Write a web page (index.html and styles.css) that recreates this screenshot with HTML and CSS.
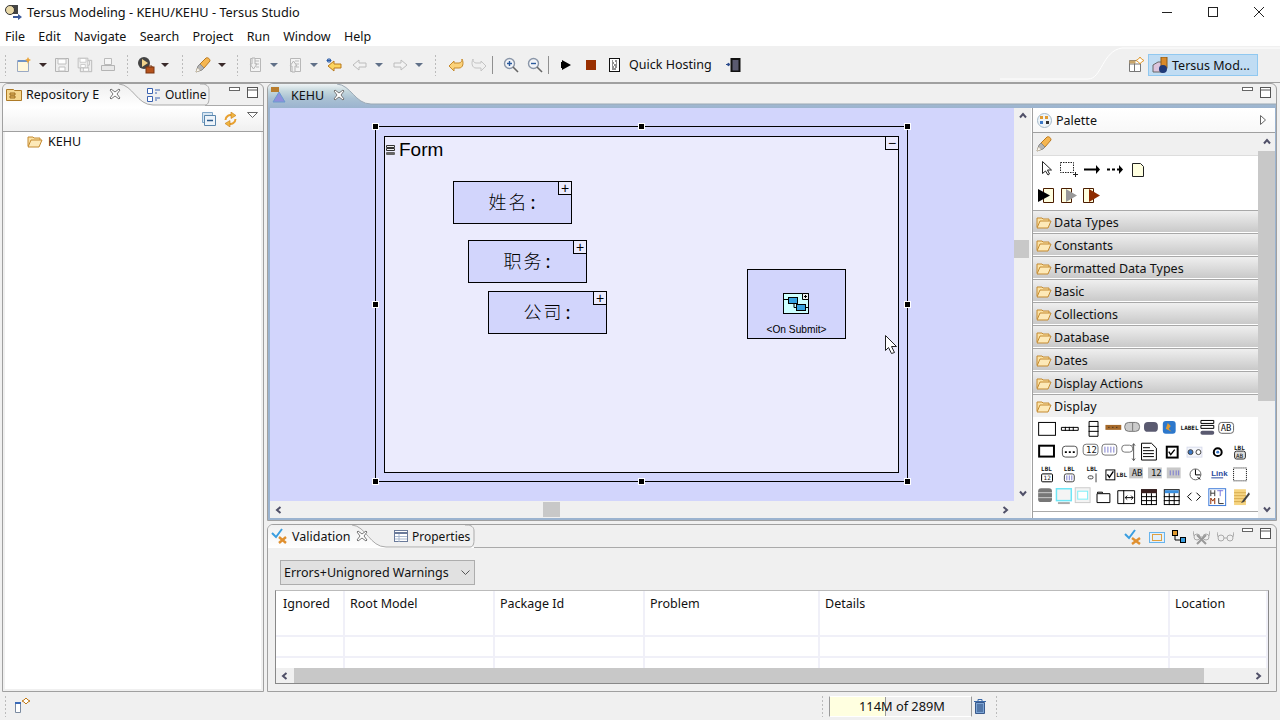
FILE: index.html
```html
<!DOCTYPE html>
<html lang="en">
  <head>
    <meta charset="UTF-8" />
    <title>Tersus Modeling - KEHU/KEHU - Tersus Studio</title>
    <link rel="stylesheet" href="styles.css">
  </head>
  <body>
    <svg class="defs" width="0" height="0">
      <defs>
        <symbol id="folder" viewBox="0 0 16 13">
          <path d="M1 11V2h5l1 1h6v2" fill="#fce3a6" stroke="#c48a30"/>
          <path d="M1 12l3-7h11l-3 7z" fill="#fde9b8" stroke="#c48a30"/>
        </symbol>
        <symbol id="x" viewBox="0 0 12 12">
          <path d="M2 1l4 3 4-3 1 1-3 4 3 4-1 1-4-3-4 3-1-1 3-4-3-4z" fill="#fff" stroke="#777"/>
        </symbol>
        <symbol id="min" viewBox="0 0 11 5">
          <rect x=".5" y=".5" width="10" height="3" fill="#fff" stroke="#666"/>
        </symbol>
        <symbol id="max" viewBox="0 0 11 11">
          <rect x=".5" y=".5" width="10" height="10" fill="#fff" stroke="#555"/>
          <path d="M0 3h11" stroke="#555"/>
        </symbol>
        <symbol id="left" viewBox="0 0 8 8">
          <path d="M5.500 1L2 4l3.500 3" fill="none" stroke="#505068" stroke-width="2"/>
        </symbol>
        <symbol id="right" viewBox="0 0 8 8">
          <path d="M2.500 1L6 4 2.500 7" fill="none" stroke="#505068" stroke-width="2"/>
        </symbol>
        <symbol id="up" viewBox="0 0 8 8">
          <path d="M1 5.500L4 2l3 3.500" fill="none" stroke="#505068" stroke-width="2"/>
        </symbol>
        <symbol id="down" viewBox="0 0 8 8">
          <path d="M1 2.500L4 6l3-3.500" fill="none" stroke="#505068" stroke-width="2"/>
        </symbol>
        <symbol id="pencil" viewBox="0 0 16 16">
          <path d="M5 7l6-6c2-1 4 1 4 3l-6 7z" fill="#f5b651" stroke="#b9781f"/>
          <path d="M5 7l4 4-2 2-6 2 2-6z" fill="#b4b4b4" stroke="#8a8a8a"/>
          <path d="M1 15l1.500-4 2.500 2.500z" fill="#fff" stroke="#c8b48c" stroke-width=".5"/>
        </symbol>
        <symbol id="floppy" viewBox="0 0 16 16">
          <path d="M1.500 1.500h13v13h-13z" fill="#eee" stroke="#b4b4b4"/>
          <path d="M4 2h8v5H4zM5 10h6v4H5z" fill="#fff" stroke="#c0c0c0"/>
        </symbol>
        <symbol id="page-gray" viewBox="0 0 16 16">
          <path d="M3.500 1.500h10v13h-10z" fill="#f4f4f4" stroke="#b8b8b8"/>
          <path d="M8 4h4M8 7h4M9 10h3" stroke="#bbb"/>
        </symbol>
        <symbol id="arrow-gray" viewBox="0 0 16 16">
          <path d="M1 8l6-5v3h7v4H7v3z" fill="#f2f2f2" stroke="#bcbcbc"/>
        </symbol>
      </defs>
    </svg>

    <header class="titlebar">
      <svg class="app-icon" width="17" height="16" viewBox="0 0 17 16">
        <rect x="6" y="1" width="7" height="9" fill="#444"/>
        <circle cx="5" cy="6" r="4.500" fill="#e9d9a8" stroke="#333"/>
        <path d="M8 12h5v-2l4 3-4 3v-2H8z" fill="#3c5a9c"/>
      </svg>
      <span class="title">Tersus Modeling - KEHU/KEHU - Tersus Studio</span>
      <div class="win-buttons">
        <span class="win-btn"><svg width="10" height="10"><path d="M0 5.500h10" stroke="#222"/></svg></span>
        <span class="win-btn"><svg width="10" height="10"><rect x=".5" y=".5" width="9" height="9" fill="none" stroke="#222"/></svg></span>
        <span class="win-btn"><svg width="10" height="10"><path d="M0 0l10 10M10 0L0 10" stroke="#222"/></svg></span>
      </div>
    </header>

    <nav class="menubar">
      <span>File</span><span>Edit</span><span>Navigate</span><span>Search</span>
      <span>Project</span><span>Run</span><span>Window</span><span>Help</span>
    </nav>

    <div class="toolbar">
      <span class="grip first"></span>
      <span class="tb">
        <svg width="16" height="16" viewBox="0 0 16 16"><path d="M1.500 3.500h11v11h-11z" fill="#fff7dc" stroke="#9aa9c4"/><path d="M2 4h10" stroke="#6f93c8" stroke-width="2"/><path d="M12 0l1 2 2 1-2 1-1 3-1-3-2-1 2-1z" fill="#e8a33a"/></svg>
      </span>
      <span class="dd"></span>
      <span class="tb"><svg width="16" height="16"><use href="#floppy"/></svg></span>
      <span class="tb"><svg width="16" height="16"><use href="#floppy" x="2" y="2" width="14" height="14"/><use href="#floppy" width="12" height="12"/></svg></span>
      <span class="tb">
        <svg width="16" height="16" viewBox="0 0 16 16"><path d="M4.500 1.500h7v6h-7z" fill="#f6f6f6" stroke="#bbb"/><path d="M1.500 8.500h13v5h-13z" fill="#e8e8e8" stroke="#b4b4b4"/></svg>
      </span>
      <span class="grip"></span>
      <span class="tb">
        <svg width="18" height="18" viewBox="0 0 18 18"><circle cx="7" cy="7" r="6" fill="#444"/><path d="M5 3l6 4-6 4z" fill="#f3d48c"/><rect x="9" y="11" width="8" height="6" fill="#b5521c" stroke="#7a3410"/><path d="M11 11v-1h4v1" fill="none" stroke="#7a3410"/></svg>
      </span>
      <span class="dd"></span>
      <span class="grip loose"></span>
      <span class="tb"><svg width="16" height="16"><use href="#pencil"/></svg></span>
      <span class="dd"></span>
      <span class="grip tight"></span>
      <span class="tb">
        <svg width="16" height="16" viewBox="0 0 16 16"><use href="#page-gray"/><path d="M5 1h3v6h2l-3.500 5L3 7h2z" fill="#f1f1f1" stroke="#b4b4b4"/></svg>
      </span>
      <span class="dd nav"></span>
      <span class="tb">
        <svg width="16" height="16" viewBox="0 0 16 16"><use href="#page-gray"/><path d="M5 15V9H3l3.500-5L10 9H8v6z" fill="#f1f1f1" stroke="#b4b4b4"/></svg>
      </span>
      <span class="dd nav"></span>
      <span class="tb">
        <svg width="17" height="16" viewBox="0 0 17 16"><path d="M2 9l6-5v3h7v4H8v3z" fill="#fbd45f" stroke="#b9791c"/><path d="M3 1v5M0.500 3.500h5M1 2l4 3M5 2L1 5" stroke="#2a5ca8"/></svg>
      </span>
      <span class="tb push-2"><svg width="16" height="16"><use href="#arrow-gray"/></svg></span>
      <span class="dd nav"></span>
      <span class="tb"><svg width="16" height="16"><g transform="matrix(-1 0 0 1 16 0)"><use href="#arrow-gray"/></g></svg></span>
      <span class="dd nav short"></span>
      <span class="grip wide"></span>
      <span class="tb">
        <svg width="16" height="16" viewBox="0 0 16 16"><path d="M1 9l5-5v2h5c2 0 3-2 3-4 2 4 1 9-3 9H6v3z" fill="#fbd27a" stroke="#c68a2c"/></svg>
      </span>
      <span class="tb">
        <svg width="16" height="16" viewBox="0 0 16 16"><path d="M15 9l-5-5v2H5C3 6 2 4 2 2c-2 4-1 9 3 9h5v3z" fill="#f0f0f0" stroke="#c4c4c4"/></svg>
      </span>
      <span class="sep sep-a"></span>
      <span class="tb">
        <svg width="16" height="16" viewBox="0 0 16 16"><circle cx="6.500" cy="6.500" r="5" fill="#f2f4f8" stroke="#8a96a8" stroke-width="1.400"/><path d="M4 6.500h5M6.500 4v5" stroke="#2b5a9c" stroke-width="1.400"/><path d="M10 10l5 5" stroke="#666" stroke-width="1.600"/></svg>
      </span>
      <span class="tb push-1">
        <svg width="16" height="16" viewBox="0 0 16 16"><circle cx="6.500" cy="6.500" r="5" fill="#f2f4f8" stroke="#8a96a8" stroke-width="1.400"/><path d="M4 6.500h5" stroke="#2b5a9c" stroke-width="1.400"/><path d="M10 10l5 5" stroke="#666" stroke-width="1.600"/></svg>
      </span>
      <span class="sep sep-b"></span>
      <span class="tb"><svg width="10" height="10" viewBox="0 0 10 10"><path d="M1 0l9 5-9 5v-2H0V2h1z" fill="#000"/></svg></span>
      <span class="tb push-2"><svg width="10" height="10"><rect width="10" height="10" fill="#992f00"/></svg></span>
      <span class="tb push-1">
        <svg width="11" height="14" viewBox="0 0 11 14"><rect x=".5" y=".5" width="10" height="13" fill="#fff" stroke="#111"/><path d="M3 3h1M6 3h2M3 5h2M7 5h1M3 7h1M5 7h3M3 9h2M6 9h2M3 11h4" stroke="#222"/></svg>
      </span>
      <span class="quick">Quick Hosting</span>
      <span class="tb phone">
        <svg width="16" height="14" viewBox="0 0 16 14"><path d="M1 6.500h3M3 5l2 1.500L3 8z" fill="#2b4a8c" stroke="#2b4a8c"/><rect x="6.500" y="1" width="8" height="12.500" fill="#5a5a70" stroke="#111" stroke-width="2"/></svg>
      </span>
      <svg class="persp-curve" width="280" height="36" viewBox="0 0 280 36">
        <path d="M0 33h88c14 0 14-28 34-31H280" fill="none" stroke="#fff"/>
      </svg>
      <div class="perspectives">
        <svg width="16" height="16" viewBox="0 0 16 16"><path d="M1.500 3.500h11v11h-11z" fill="#fff" stroke="#777"/><path d="M1 7h12M6.500 4v10" stroke="#777"/><path d="M1.500 3.500h6v3h-6z" fill="#c9a56a"/><path d="M12 0l1.500 2L16 3.500 13.500 5 12 7l-1.500-2L8 3.500 10.500 2z" fill="#fff" stroke="#e09a30"/></svg>
        <div class="persp-btn">
          <svg width="17" height="17" viewBox="0 0 17 17"><path d="M1 8l5-3h5v10H1z" fill="#dcc4dc" stroke="#666"/><rect x="9" y="0" width="6" height="11" fill="#d98a2a" stroke="#8a5a18"/><circle cx="11" cy="12" r="4" fill="#1f3a78"/></svg>
          <span>Tersus Mod...</span>
        </div>
      </div>
    </div>

    <main class="workbench">
      <section class="view left-view">
        <div class="tabs">
          <svg class="tab-shape" width="261" height="23" viewBox="0 0 261 23">
            <defs><linearGradient id="tab-grad" x1="0" y1="0" x2="0" y2="1"><stop offset="0" stop-color="#f0f0f0"/><stop offset="1" stop-color="#fff"/></linearGradient></defs>
            <path d="M0 23V0h116c14 1 18 21 34 21H261v2z" fill="url(#tab-grad)"/>
            <path d="M116 0c14 1 18 21 34 21h52c3 0 4-3 4-7V6c0-4-3-6-7-6h-2M202 21.500h59" fill="none" stroke="#aaa"/>
          </svg>
          <span class="tab repo-tab">
            <svg width="16" height="14" viewBox="0 0 16 14"><path d="M.500 2.500h7l1 1h7v10H.500z" fill="#f5d68e" stroke="#ad7a26"/><path d="M4 6h5v2H4zM4 9h5v2H4z" fill="#e9bd62" stroke="#9d6d20"/></svg>
            <span class="tab-label">Repository E</span>
            <svg class="tab-x" width="12" height="12"><use href="#x"/></svg>
          </span>
          <span class="tab outline-tab">
            <svg width="14" height="15" viewBox="0 0 14 15"><path d="M.500 1.500h5v5h-5zM.500 9.500h5v5h-5z" fill="#fff" stroke="#3a62b0"/><path d="M8 3h5M8 6h2M8 11h5M8 13h2" stroke="#3a62b0"/></svg>
            <span class="tab-label">Outline</span>
          </span>
          <span class="view-ctl">
            <svg width="11" height="5"><use href="#min"/></svg>
            <svg width="11" height="11"><use href="#max"/></svg>
          </span>
        </div>
        <div class="view-bar">
          <svg width="14" height="14" viewBox="0 0 14 14"><path d="M.500 .500h10v10H.500z" fill="#d8e6f2" stroke="#7fa6c8"/><path d="M2.500 3.500h11v10h-11z" fill="#eef4fa" stroke="#5a86ac"/><path d="M5 8.500h6" stroke="#2a5a8c" stroke-width="1.400"/></svg>
          <svg width="15" height="15" viewBox="0 0 15 15"><path d="M2.500 8a5 5 0 0 1 7-4.500M12.500 7a5 5 0 0 1-7 4.500" fill="none" stroke="#e8a030" stroke-width="2"/><path d="M8 0l5 3.500-5 3zM7 15l-5-3.500 5-3z" fill="#f2b640" stroke="#c47d1c" stroke-width=".6"/></svg>
          <svg class="view-menu" width="11" height="6" viewBox="0 0 11 6"><path d="M.500 .500h10l-5 5z" fill="#fff" stroke="#666"/></svg>
        </div>
        <div class="tree">
          <div class="tree-row">
            <svg width="16" height="13"><use href="#folder"/></svg>
            <span>KEHU</span>
          </div>
        </div>
      </section>

      <div class="center">
        <section class="view editor">
          <div class="editor-tabs">
            <svg class="tab-shape" width="1008" height="24" viewBox="0 0 1008 24">
              <defs><linearGradient id="ed-grad" x1="0" y1="0" x2="0" y2="1"><stop offset="0" stop-color="#eef3f5"/><stop offset=".3" stop-color="#c4d7dd"/><stop offset=".6" stop-color="#aac1d3"/><stop offset="1" stop-color="#9bb3cf"/></linearGradient></defs>
              <path d="M0 24V5c0-3 2-5 5-5h64c14 1 18 20 34 20H1008v4z" fill="url(#ed-grad)"/>
              <path d="M69 0c14 1 18 20 34 20H1008" fill="none" stroke="#9aa8b4"/>
            </svg>
            <span class="tab editor-tab">
              <svg width="16" height="16" viewBox="0 0 16 16"><rect x="0" y="0" width="8" height="5" fill="#b87d2e"/><path d="M8 5l6 10H2z" fill="#8f8fdc" stroke="#6a9ad0"/></svg>
              <span class="tab-label">KEHU</span>
              <svg class="tab-x" width="12" height="12"><use href="#x"/></svg>
            </span>
            <span class="view-ctl">
              <svg width="11" height="5"><use href="#min"/></svg>
              <svg width="11" height="11"><use href="#max"/></svg>
            </span>
          </div>
          <div class="editor-body">
            <div class="canvas-wrap">
              <div class="canvas-row">
                <div class="canvas">
                  <div class="selection">
                    <span class="handle h-tl"></span><span class="handle h-tc"></span><span class="handle h-tr"></span>
                    <span class="handle h-ml"></span><span class="handle h-mr"></span>
                    <span class="handle h-bl"></span><span class="handle h-bc"></span><span class="handle h-br"></span>
                  </div>
                  <div class="form">
                    <div class="form-title">
                      <svg width="12" height="12" viewBox="0 0 12 12"><path d="M1.500 1.500h8v2h-8zM1.500 4.500h8v2h-8z" fill="#eee" stroke="#333"/><rect x="1" y="8" width="9" height="3" rx="1" fill="#666"/></svg>
                      <span>Form</span>
                    </div>
                    <span class="toggle form-toggle">−</span>
                  </div>
                  <div class="node node-name">姓名<b>:</b><span class="toggle">+</span></div>
                  <div class="node node-job">职务<b>:</b><span class="toggle">+</span></div>
                  <div class="node node-company">公司<b>:</b><span class="toggle">+</span></div>
                  <div class="node-submit">
                    <svg width="27" height="22" viewBox="0 0 27 22">
                      <rect x=".5" y=".5" width="25" height="20" fill="#ccffff" stroke="#000"/>
                      <path d="M19.500 .5h6v6h-6z" fill="#eee" stroke="#000"/>
                      <path d="M21 3.500h3M22.500 2v3" stroke="#000"/>
                      <path d="M1 6.500h5M11 9v5.500h6M22 14.500h3.500v-8" fill="none" stroke="#000"/>
                      <rect x="5.500" y="4.500" width="9" height="6" fill="#36a2e0" stroke="#000"/>
                      <rect x="13.500" y="11.500" width="9" height="6" fill="#36a2e0" stroke="#000"/>
                    </svg>
                    <span>&lt;On Submit&gt;</span>
                  </div>
                  <svg class="pointer" width="14" height="20" viewBox="0 0 14 20">
                    <path d="M.500 .500v15l3-3 3 6 3-1-3-6h5z" fill="#fff" stroke="#222"/>
                  </svg>
                </div>
                <div class="vscroll">
                  <svg width="8" height="8"><use href="#up"/></svg>
                  <span class="vthumb"></span>
                  <svg width="8" height="8"><use href="#down"/></svg>
                </div>
              </div>
              <div class="hscroll">
                <svg width="8" height="8"><use href="#left"/></svg>
                <span class="hthumb"></span>
                <svg width="8" height="8"><use href="#right"/></svg>
              </div>
            </div>

            <aside class="palette">
              <div class="palette-head">
                <svg width="15" height="15" viewBox="0 0 15 15"><circle cx="7.500" cy="7.500" r="7" fill="#eef4f8" stroke="#a4b8c8"/><rect x="3" y="3" width="3" height="3" fill="#e09a30"/><rect x="8" y="3" width="3" height="3" fill="#e09a30"/><rect x="3" y="8" width="3" height="3" fill="#3a78c8"/><rect x="9" y="8" width="3" height="3" fill="#333"/></svg>
                <span>Palette</span>
                <svg class="palette-collapse" width="6" height="10" viewBox="0 0 6 10"><path d="M.500 .500l5 4.500-5 4.500z" fill="#fff" stroke="#666"/></svg>
              </div>
              <div class="palette-main">
                <div class="palette-list">
                  <div class="tool-drawer"><svg width="16" height="16"><use href="#pencil"/></svg></div>
                  <svg class="tools" width="225" height="54" viewBox="1033 156 225 54">
                    <path d="M1042.500 161.500v12l3-2.500 2.500 4 1.500-1-2-4h4z" fill="#fff" stroke="#222"/>
                    <rect x="1060.500" y="162.500" width="13" height="10" fill="none" stroke="#222" stroke-dasharray="1.500 1"/>
                    <path d="M1073 174.500h5M1075.500 172v5" stroke="#222"/>
                    <path d="M1084 169.500h12" stroke="#000" stroke-width="2"/><path d="M1096 165l4 4.500-4 4.500z"/>
                    <path d="M1107 169.500h12" stroke="#000" stroke-width="2" stroke-dasharray="3 2"/><path d="M1119 165l4 4.500-4 4.500z"/>
                    <path d="M1132.500 163.500h8l3 3v10h-11z" fill="#ffffe0" stroke="#222"/>
                    <path d="M1043.500 188.500h10v14h-10z" fill="#ffffe0" stroke="#4a1c00"/>
                    <path d="M1038 189l12 6.500-12 6.500z"/>
                    <path d="M1061.500 188.500h10v14h-10z" fill="#ffffe0" stroke="#4a1c00"/>
                    <path d="M1066 189l11 6.500-11 6.500z" fill="#999"/>
                    <path d="M1083.500 188.500h10v14h-10z" fill="#ffffe0" stroke="#4a1c00"/>
                    <path d="M1089 189l11 6.500-11 6.500z" fill="#8e2a00"/>
                  </svg>
                  <div class="drawer"><svg width="16" height="13"><use href="#folder"/></svg>Data Types</div>
                  <div class="drawer"><svg width="16" height="13"><use href="#folder"/></svg>Constants</div>
                  <div class="drawer"><svg width="16" height="13"><use href="#folder"/></svg>Formatted Data Types</div>
                  <div class="drawer"><svg width="16" height="13"><use href="#folder"/></svg>Basic</div>
                  <div class="drawer"><svg width="16" height="13"><use href="#folder"/></svg>Collections</div>
                  <div class="drawer"><svg width="16" height="13"><use href="#folder"/></svg>Database</div>
                  <div class="drawer"><svg width="16" height="13"><use href="#folder"/></svg>Dates</div>
                  <div class="drawer"><svg width="16" height="13"><use href="#folder"/></svg>Display Actions</div>
                  <div class="drawer open"><svg width="16" height="13"><use href="#folder"/></svg>Display</div>
                  <svg class="display-icons" width="225" height="95" viewBox="1033 418 225 95">
                    <!-- row 1 -->
                    <rect x="1037.500" y="423.500" width="17" height="13" fill="#fff" stroke="#000"/>
                    <path d="M1060.500 428.500h17v3h-17zM1064.500 428v4M1068.500 428v4M1072.500 428v4" fill="#fff" stroke="#000"/>
                    <path d="M1088.500 422.500h9v15h-9zM1088 427.500h10M1088 432.500h10" fill="#fff" stroke="#000"/>
                    <rect x="1105" y="426" width="16" height="5" fill="#a5692a"/>
                    <path d="M1108 428.500h1M1112 428.500h1M1116 428.500h1" stroke="#222"/>
                    <rect x="1124.500" y="423.500" width="15" height="9" rx="4" fill="#ccc" stroke="#777"/>
                    <path d="M1132.500 424v8" stroke="#777"/>
                    <rect x="1144" y="423" width="14" height="10" rx="4" fill="#5a5a70"/>
                    <rect x="1163" y="422" width="13" height="13" rx="3" fill="#2d78cc"/>
                    <path d="M1168 424l3 3-2 3 3 3-6-3z" fill="#e09a30"/>
                    <text class="px-bold" x="1181" y="431">LABEL</text>
                    <path d="M1201.500 421.500h13v3h-13zM1201.500 426.500h13v3h-13z" fill="#fff" stroke="#000"/>
                    <rect x="1201" y="432" width="14" height="4" rx="2" fill="#5a5a70"/>
                    <rect x="1219.500" y="423.500" width="15" height="11" rx="3" fill="#fff" stroke="#666"/>
                    <text class="px" x="1221.500" y="432">AB</text>
                    <!-- row 2 -->
                    <rect x="1038" y="447" width="15" height="11" fill="#fff" stroke="#000" stroke-width="2"/>
                    <rect x="1061.500" y="447.500" width="15" height="11" rx="3" fill="#fff" stroke="#555"/>
                    <path d="M1064 453.500h2M1068 453.500h2M1072 453.500h2" stroke="#000" stroke-width="2"/>
                    <rect x="1082.500" y="445.500" width="15" height="11" rx="3" fill="#fff" stroke="#777"/>
                    <text class="px" x="1085.500" y="454">12</text>
                    <rect x="1101.500" y="445.500" width="15" height="11" rx="3" fill="#fff" stroke="#777"/>
                    <path d="M1104.500 448v6M1107.500 448v6M1110.500 448v6M1113.500 448v6" stroke="#8080d0"/>
                    <rect x="1121.500" y="446.500" width="11" height="7" rx="3" fill="#fff" stroke="#777"/>
                    <path d="M1133.500 445v17M1132 447l1.500-2 1.500 2M1132 460l1.500 2 1.500-2" fill="none" stroke="#555"/>
                    <path d="M1141.500 444.500h10l5 5v12h-15z" fill="#fff" stroke="#000"/>
                    <path d="M1143 449h7M1143 452h11M1143 455h11M1143 458h11" stroke="#000"/>
                    <rect x="1167" y="448" width="11" height="11" fill="#fff" stroke="#000" stroke-width="2"/>
                    <path d="M1169 453l2 3 4-5" fill="none" stroke="#000" stroke-width="1.400"/>
                    <rect x="1187.500" y="448.500" width="15" height="10" fill="#f4f6fc" stroke="#d8dcec"/>
                    <circle cx="1191" cy="453.500" r="2.500" fill="#3a78c8" stroke="#444"/>
                    <circle cx="1199" cy="453.500" r="2.500" fill="#fff" stroke="#444"/>
                    <circle cx="1218.500" cy="453.500" r="4" fill="#fff" stroke="#000" stroke-width="2"/>
                    <circle cx="1218.500" cy="453.500" r="1.500" fill="#3a78c8"/>
                    <text class="px-bold" x="1235" y="451">LBL</text>
                    <rect x="1235.500" y="452.500" width="11" height="8" rx="2" fill="#ddd" stroke="#333"/>
                    <text class="px-tiny" x="1237" y="459">AB</text>
                    <!-- row 3 -->
                    <text class="px-bold" x="1040" y="473">LBL</text>
                    <rect x="1040.500" y="475.500" width="11" height="8" rx="1" fill="#fff" stroke="#000"/>
                    <text class="px-tiny" x="1042.500" y="482">12</text>
                    <text class="px-bold" x="1063" y="473">LBL</text>
                    <rect x="1063.500" y="475.500" width="10" height="8" rx="2" fill="#fff" stroke="#444"/>
                    <path d="M1066 477v5M1068.500 477v5M1071 477v5" stroke="#8080d0"/>
                    <text class="px-bold" x="1086" y="473">LBL</text>
                    <rect x="1087.500" y="477.500" width="5" height="3" rx="1.500" fill="#fff" stroke="#444"/>
                    <path d="M1095.500 475v9" stroke="#444"/>
                    <rect x="1105.500" y="471.500" width="9" height="10" fill="#fff" stroke="#000"/>
                    <path d="M1107 476l2 3 4-6" fill="none" stroke="#000" stroke-width="1.400"/>
                    <text class="px-bold" x="1116" y="479">LBL</text>
                    <rect x="1129" y="469" width="14" height="11" fill="#c8c8c8"/>
                    <text class="px" x="1131.500" y="478">AB</text>
                    <rect x="1148" y="469" width="14" height="11" fill="#c8c8c8"/>
                    <text class="px" x="1151" y="478">12</text>
                    <rect x="1167" y="469" width="14" height="11" fill="#c8c8c8"/>
                    <path d="M1170.500 472v5M1173.500 472v5M1176.500 472v5M1179 472v5" stroke="#7a7ad0"/>
                    <circle cx="1196" cy="476" r="5.500" fill="#fff" stroke="#666"/>
                    <path d="M1196 471v5.500h5M1198 479l3 2" fill="none" stroke="#000"/>
                    <text class="link-text" x="1212" y="478">Link</text>
                    <path d="M1212 479.500h12" stroke="#2a4a9c"/>
                    <rect x="1234.500" y="469.500" width="13" height="13" fill="none" stroke="#000" stroke-dasharray="1 1"/>
                    <!-- row 4 -->
                    <rect x="1037" y="490" width="14" height="14" rx="3" fill="#777"/>
                    <path d="M1037 494.500h14M1037 499.500h14" stroke="#ccc"/>
                    <rect x="1055.500" y="490.500" width="15" height="12" fill="#f4f4f4" stroke="#6ee6f6" stroke-width="1.500"/>
                    <path d="M1057 505h12" stroke="#aaa" stroke-width="2"/>
                    <rect x="1074.500" y="489.500" width="15" height="15" fill="#f4f4f4" stroke="#ccc"/>
                    <rect x="1077" y="493" width="10" height="8" fill="#fff" stroke="#7ff0f8"/>
                    <path d="M1096.500 495.500h13v9h-13zM1097 495v-1h5v1" fill="#fff" stroke="#000"/>
                    <path d="M1117.500 492.500h17v13h-17zM1123.500 492v14" fill="#fff" stroke="#000"/>
                    <path d="M1125 499.500h8M1127 497.500l-2 2 2 2M1131 497.500l2 2-2 2" fill="none" stroke="#000"/>
                    <rect x="1141.500" y="491.500" width="15" height="15" fill="#fff" stroke="#000"/>
                    <rect x="1141" y="491" width="16" height="4" fill="#3a2020"/>
                    <path d="M1146.500 495v12M1151.500 495v12M1141 498.500h16M1141 502.500h16" stroke="#000"/>
                    <rect x="1164.500" y="491.500" width="15" height="15" fill="#fff" stroke="#000"/>
                    <rect x="1165" y="492" width="14" height="3" fill="#3a90e0"/>
                    <path d="M1169.500 495v12M1174.500 495v12M1164 498.500h16M1164 502.500h16" stroke="#000"/>
                    <path d="M1192 494.500l-4 4 4 4M1197 494.500l4 4-4 4" fill="none" stroke="#000"/>
                    <rect x="1209.500" y="490.500" width="17" height="17" fill="#fff" stroke="#3a78d8"/>
                    <path d="M1211.500 492v6M1215.500 492v6M1211.500 495h4" stroke="#3a3a3a"/>
                    <path d="M1218 492.500h6M1221 492v6" stroke="#7a7ae0"/>
                    <path d="M1211.500 506v-6l2 3 2-3v6" fill="none" stroke="#8e2a00"/>
                    <path d="M1219.500 500v5.500h5" fill="none" stroke="#333"/>
                    <rect x="1235" y="491" width="12" height="16" fill="#f6d480"/>
                    <path d="M1235 494.500h12M1235 497.500h12M1235 500.500h12M1235 503.500h12" stroke="#d8ac50"/>
                    <path d="M1250 494l-6 8-2 3 3-1 6-8z" fill="#444"/>
                  </svg>
                </div>
                <div class="palette-scroll">
                  <svg class="ps-arrow" width="8" height="8"><use href="#up"/></svg>
                  <span class="ps-thumb"></span>
                  <svg class="ps-arrow" width="8" height="8"><use href="#down"/></svg>
                </div>
              </div>
            </aside>
          </div>
        </section>

        <section class="view bottom">
          <div class="tabs">
            <svg class="tab-shape" width="1008" height="23" viewBox="0 0 1008 23">
              <path d="M0 23V0h84c14 1 18 22 34 22H1008v1z" fill="url(#tab-grad)"/>
              <path d="M84 0c14 1 18 22 34 22h84c3 0 4-3 4-7V6c0-4-3-6-7-6h-2M206 22.500h802" fill="none" stroke="#aaa"/>
            </svg>
            <span class="tab validation-tab">
              <svg width="17" height="16" viewBox="0 0 17 16"><path d="M1 5l4 4 6-8" fill="none" stroke="#3a9ee0" stroke-width="2"/><path d="M8 9l7 6M15 9l-7 6" stroke="#e09030" stroke-width="2.400"/></svg>
              <span class="tab-label">Validation</span>
              <svg class="tab-x" width="12" height="12"><use href="#x"/></svg>
            </span>
            <span class="tab properties-tab">
              <svg width="14" height="12" viewBox="0 0 14 12"><rect x=".5" y=".5" width="13" height="11" fill="#fff" stroke="#6a7a9a"/><path d="M1 3h12" stroke="#6a7a9a" stroke-width="2"/><path d="M1 6.500h12M1 9h12M5 4v8" stroke="#a8b8d0"/></svg>
              <span class="tab-label">Properties</span>
            </span>
            <span class="bottom-tools">
              <svg width="18" height="16" viewBox="0 0 18 16"><path d="M1 5l4 4 6-8" fill="none" stroke="#3a9ee0" stroke-width="2"/><path d="M8 9l8 6M16 9l-8 6" stroke="#e09030" stroke-width="2.400"/></svg>
              <svg width="16" height="11" viewBox="0 0 16 11"><rect x=".5" y=".5" width="15" height="10" fill="#e4f0fa" stroke="#68b4ec"/><rect x="3.500" y="2.500" width="9" height="6" fill="none" stroke="#e0a040"/></svg>
              <svg width="14" height="14" viewBox="0 0 14 14"><rect x=".5" y=".5" width="5" height="5" fill="#e09a30" stroke="#000"/><rect x="8.500" y="7.500" width="5" height="5" fill="#3a9ee0" stroke="#000"/><path d="M3 6v4h5" fill="none" stroke="#000"/></svg>
              <svg width="17" height="16" viewBox="0 0 17 16"><circle cx="4" cy="8" r="3" fill="none" stroke="#aaa"/><circle cx="13" cy="8" r="3" fill="none" stroke="#aaa"/><path d="M1 7L0 2M16 7l1-5M7 8h3" stroke="#aaa"/><path d="M4 6l9 9M13 6l-9 9" stroke="#999" stroke-width="2"/></svg>
              <svg width="17" height="12" viewBox="0 0 17 12"><circle cx="4" cy="7" r="3" fill="none" stroke="#aaa"/><circle cx="13" cy="7" r="3" fill="none" stroke="#aaa"/><path d="M1 6L0 1M16 6l1-5M7 7h3" stroke="#aaa"/></svg>
            </span>
            <span class="view-ctl">
              <svg width="11" height="5"><use href="#min"/></svg>
              <svg width="11" height="11"><use href="#max"/></svg>
            </span>
          </div>
          <div class="bottom-body">
            <div class="combo">
              <span>Errors+Unignored Warnings</span>
              <svg width="9" height="5" viewBox="0 0 9 5"><path d="M.500 .500l4 4 4-4" fill="none" stroke="#555"/></svg>
            </div>
            <div class="table-box">
              <table class="results">
                <thead>
                  <tr><th>Ignored</th><th>Root Model</th><th>Package Id</th><th>Problem</th><th>Details</th><th>Location</th></tr>
                </thead>
                <tbody>
                  <tr><td></td><td></td><td></td><td></td><td></td><td></td></tr>
                  <tr><td></td><td></td><td></td><td></td><td></td><td></td></tr>
                  <tr class="cut"><td></td><td></td><td></td><td></td><td></td><td></td></tr>
                </tbody>
              </table>
              <div class="table-scroll">
                <svg width="8" height="8"><use href="#left"/></svg>
                <span class="table-thumb"></span>
                <svg width="8" height="8"><use href="#right"/></svg>
              </div>
            </div>
          </div>
        </section>
      </div>
    </main>

    <footer class="statusbar">
      <span class="grip status-grip"></span>
      <svg width="16" height="16" viewBox="0 0 16 16"><path d="M.500 4.500h5v10h-5z" fill="#fff" stroke="#7a8aa0"/><path d="M0 5h6" stroke="#3a6ab8" stroke-width="2"/><path d="M11 0l2 2 2 1-2 1-2 2-2-2-2-1 2-1z" fill="#fff" stroke="#c07a18"/></svg>
      <span class="grip heap-grip"></span>
      <div class="heap">
        <span class="heap-used"></span>
        <span class="heap-text">114M of 289M</span>
      </div>
      <svg class="trash" width="12" height="15" viewBox="0 0 12 15"><path d="M0 2.500h12M4 2V.5h4V2" fill="none" stroke="#3a68a8"/><path d="M1.500 3.500h9v11h-9z" fill="#7ca4d4" stroke="#3a5a8c"/><path d="M4 5v8M6 5v8M8 5v8" stroke="#2a4a7c"/></svg>
      <span class="grip end-grip"></span>
    </footer>
  </body>
</html>
```

FILE: styles.css
```css
* {
  box-sizing: border-box;
}
body {
  margin: 0;
  width: 1280px;
  height: 720px;
  overflow: hidden;
  display: flex;
  flex-direction: column;
  background-color: #f0f0f0;
  font-family: "Noto Sans", sans-serif;
  font-size: 12.500px;
  color: #111;
}
svg {
  display: block;
  flex: none;
}
.defs {
  position: absolute;
}

/* title and menu */
.titlebar {
  height: 24px;
  flex: none;
  display: flex;
  align-items: center;
  padding-left: 5px;
  background-color: #fff;
}
.title {
  margin-left: 5px;
  font-size: 12.750px;
}
.win-buttons {
  margin-left: auto;
  margin-right: -2px;
  display: flex;
}
.win-btn {
  width: 46px;
  display: flex;
  justify-content: center;
}
.menubar {
  height: 22px;
  flex: none;
  display: flex;
  align-items: center;
  gap: 13.300px;
  padding: 3px 0 0 5px;
  background-color: #fff;
}

/* main toolbar */
.toolbar {
  height: 37px;
  flex: none;
  position: relative;
  display: flex;
  align-items: center;
  padding: 1px 0 0 4px;
  border-bottom: 1px solid #a0a0a0;
}
.grip {
  width: 3px;
  height: 22px;
  margin: 0 5px 0 7px;
  flex: none;
  background-image: radial-gradient(#bbb 1px, transparent 1px);
  background-size: 3px 4px;
}
.grip.first {
  margin-left: 0;
  margin-right: 5px;
}
.grip.loose {
  margin: 0 7px 0 9px;
}
.grip.tight {
  margin-right: 4px;
}
.grip.wide {
  margin: 0 7px 0 8px;
}
.tb {
  width: 23px;
  height: 22px;
  flex: none;
  display: flex;
  align-items: center;
  justify-content: center;
}
.push-1 {
  margin-left: 1px;
}
.push-2 {
  margin-left: 2px;
}
.dd {
  width: 15px;
  height: 22px;
  flex: none;
  position: relative;
}
.dd::after {
  content: "";
  position: absolute;
  left: 4px;
  top: 9px;
  border-left: 4px solid transparent;
  border-right: 4px solid transparent;
  border-top: 4px solid #3a2a2a;
}
.dd.nav {
  width: 17px;
}
.dd.nav.short {
  width: 15px;
}
.dd.nav::after {
  border-top-color: #607088;
}
.sep {
  width: 1px;
  height: 18px;
  flex: none;
  background-color: #909090;
}
.sep-a {
  margin: 0 6px 0 2px;
}
.sep-b {
  margin: 0 5px 0 2px;
}
.quick {
  margin-left: 3px;
  width: 82px;
  white-space: nowrap;
}
.phone {
  margin-left: 10px;
}
.persp-curve {
  position: absolute;
  right: 0;
  top: 0;
}
.perspectives {
  position: absolute;
  right: 22px;
  top: 8px;
  display: flex;
  align-items: center;
  gap: 4px;
}
.persp-btn {
  width: 110px;
  height: 22px;
  display: flex;
  align-items: center;
  gap: 3px;
  padding-left: 3px;
  background-color: #c0dcf3;
  border: 1px solid #90c8f0;
}

/* views */
.workbench {
  height: 609px;
  flex: none;
  display: flex;
  gap: 3px;
  padding: 0 3px 0 2px;
}
.view {
  border: 1px solid #a0a0a0;
  border-radius: 6px 6px 0 0;
  display: flex;
  flex-direction: column;
  overflow: hidden;
}
.left-view {
  width: 262px;
  flex: none;
}
.center {
  flex: 1;
  min-width: 0;
  display: flex;
  flex-direction: column;
  gap: 3px;
}
.tabs {
  height: 23px;
  flex: none;
  position: relative;
  display: flex;
  align-items: center;
  padding-bottom: 3px;
}
.tab-shape {
  position: absolute;
  left: 0;
  top: 0;
}
.tab {
  position: relative;
  display: flex;
  align-items: center;
  gap: 4px;
}
.tab-x {
  margin-left: 9px;
}
.repo-tab {
  width: 144px;
  padding-left: 3px;
}
.repo-tab .tab-label {
  width: 70px;
  white-space: nowrap;
}
.outline-tab {
  width: 75px;
}
.outline-tab .tab-label,
.properties-tab .tab-label {
  font-size: 12px;
}
.view-ctl {
  position: absolute;
  right: 5px;
  top: 3px;
  display: flex;
  gap: 7px;
  align-items: flex-start;
}
.view-bar {
  height: 25px;
  flex: none;
  position: relative;
  display: flex;
  align-items: center;
  justify-content: flex-end;
  gap: 7px;
  padding: 0 25px 0 0;
  background: linear-gradient(#fff, #f0f0f0);
  border-bottom: 1px solid #a0a0a0;
}
.view-menu {
  position: absolute;
  right: 5px;
  top: 5px;
}
.tree {
  flex: 1;
  margin: 0 2px 2px;
  padding: 1px 0 0 22px;
  background-color: #fff;
}
.tree-row {
  display: flex;
  align-items: center;
  gap: 5px;
}

/* editor */
.editor {
  height: 438px;
  flex: none;
}
.editor-tabs {
  height: 24px;
  flex: none;
  position: relative;
  display: flex;
  align-items: center;
  padding-bottom: 2px;
}
.editor-tab {
  padding: 0 0 0 3px;
}
.editor-tab .tab-x {
  margin-left: 5px;
}
.editor-body {
  flex: 1;
  min-height: 0;
  display: flex;
  border: solid #9bb3cf;
  border-width: 0 1px 2px 2px;
  background-color: #fff;
}
.canvas-wrap {
  width: 761px;
  flex: none;
  display: flex;
  flex-direction: column;
}
.canvas-row {
  flex: 1;
  min-height: 0;
  display: flex;
}
.canvas {
  flex: 1;
  position: relative;
  background-color: #d2d5fc;
  overflow: hidden;
}
.selection {
  position: absolute;
  left: 105px;
  top: 18px;
  width: 533px;
  height: 356px;
  border: 1px solid #000;
}
.handle {
  position: absolute;
  width: 7px;
  height: 7px;
  background-color: #000;
  border: 1px solid #fff;
}
.h-tl, .h-ml, .h-bl { left: -4px; }
.h-tc, .h-bc { left: 262px; }
.h-tr, .h-mr, .h-br { right: -4px; }
.h-tl, .h-tc, .h-tr { top: -4px; }
.h-ml, .h-mr { top: 174px; }
.h-bl, .h-bc, .h-br { bottom: -4px; }
.form {
  position: absolute;
  left: 114px;
  top: 28px;
  width: 515px;
  height: 337px;
  background-color: #ebebfd;
  border: 1px solid #000;
}
.form-title {
  display: flex;
  align-items: center;
  gap: 2px;
  padding-top: 1px;
  font-family: "Liberation Sans", sans-serif;
  font-size: 19px;
  color: #000;
  line-height: 23px;
}
.toggle {
  position: absolute;
  right: 0;
  top: 0;
  width: 13px;
  height: 13px;
  display: flex;
  align-items: center;
  justify-content: center;
  background-color: #ebebfd;
  border: solid #000;
  border-width: 0 0 1px 1px;
  font-family: "Liberation Sans", sans-serif;
  font-size: 14px;
  font-weight: normal;
  line-height: 1;
  letter-spacing: 0;
}
.node {
  position: absolute;
  width: 119px;
  height: 43px;
  display: flex;
  align-items: center;
  justify-content: center;
  padding: 0 0 3px 1px;
  background-color: #d2d5fc;
  border: 1px solid #000;
  font-family: "Noto Sans CJK SC", sans-serif;
  font-size: 18px;
  font-weight: 300;
  letter-spacing: 2px;
  color: #000;
}
.node b {
  margin-left: 2px;
}
.node-name { left: 183px; top: 73px; }
.node-job { left: 198px; top: 132px; }
.node-company { left: 218px; top: 183px; }
.node-submit {
  position: absolute;
  left: 477px;
  top: 161px;
  width: 99px;
  height: 70px;
  display: flex;
  flex-direction: column;
  align-items: center;
  padding-top: 23px;
  background-color: #d2d5fc;
  border: 1px solid #000;
  font-family: "Liberation Sans", sans-serif;
  font-size: 10.200px;
  color: #000;
}
.node-submit span {
  margin-top: 9px;
}
.pointer {
  position: absolute;
  left: 615px;
  top: 227px;
}
.vscroll {
  width: 17px;
  flex: none;
  position: relative;
  display: flex;
  flex-direction: column;
  justify-content: space-between;
  align-items: center;
  padding: 4px 0;
  background-color: #f0f0f0;
}
.vthumb {
  position: absolute;
  left: 0;
  top: 132px;
  width: 15px;
  height: 18px;
  background-color: #c8c8c8;
}
.hscroll {
  height: 17px;
  flex: none;
  position: relative;
  display: flex;
  justify-content: space-between;
  align-items: center;
  padding: 0 22px 0 5px;
  background-color: #f0f0f0;
}
.hthumb {
  position: absolute;
  left: 273px;
  top: 1px;
  width: 17px;
  height: 15px;
  background-color: #c8c8c8;
}

/* palette */
.palette {
  flex: 1;
  min-width: 0;
  margin-left: 1px;
  display: flex;
  flex-direction: column;
  border-left: 1px solid #a0a0a0;
}
.palette-head {
  height: 25px;
  flex: none;
  display: flex;
  align-items: center;
  gap: 4px;
  padding: 0 8px 0 4px;
  background: linear-gradient(#fff, #f8f8f8);
  border-bottom: 1px solid #a0a0a0;
}
.palette-collapse {
  margin-left: auto;
  margin-right: 1px;
}
.palette-main {
  flex: 1;
  min-height: 0;
  display: flex;
}
.palette-list {
  width: 225px;
  flex: none;
  background-color: #fff;
}
.tool-drawer {
  height: 23px;
  display: flex;
  align-items: center;
  padding-left: 3px;
  background-color: #f0f0f0;
  border-bottom: 1px solid #ddd;
}
.drawer {
  height: 23px;
  display: flex;
  align-items: center;
  gap: 2px;
  padding: 1px 0 0 3px;
  background: linear-gradient(#efefef, #c9c9c9);
  border-top: 1px solid #a8a8a8;
  border-bottom: 1px solid #fff;
}
.drawer.open {
  padding-top: 0;
  background: #f0f0f0;
  border-bottom: 0;
}
.display-icons {
  border-bottom: 1px solid #aaa;
}
.display-icons text {
  font-family: "DejaVu Sans Mono", monospace;
  fill: #111;
}
.display-icons .px {
  font-size: 9px;
}
.display-icons .px-bold {
  font-size: 6px;
  font-weight: bold;
}
.display-icons .px-tiny {
  font-size: 6px;
}
.display-icons .link-text {
  font-family: "Liberation Sans", sans-serif;
  font-size: 8px;
  font-weight: bold;
  fill: #2a4a9c;
}
.palette-scroll {
  flex: 1;
  display: flex;
  flex-direction: column;
  align-items: center;
  background-color: #f0f0f0;
}
.ps-arrow {
  margin: 5px 0;
}
.ps-thumb {
  width: 100%;
  height: 250px;
  margin-bottom: auto;
  background-color: #c8c8c8;
}

/* bottom view */
.bottom {
  height: 168px;
  flex: none;
}
.bottom .tabs {
  padding-bottom: 1px;
}
.validation-tab {
  width: 117px;
  padding-left: 3px;
}
.validation-tab .tab-label {
  width: 60px;
}
.validation-tab .tab-x {
  margin-left: 0;
}
.properties-tab {
  margin-left: 9px;
  gap: 4px;
}
.bottom-tools {
  position: absolute;
  right: 42px;
  top: 4px;
  display: flex;
  align-items: center;
  gap: 7px;
}
.bottom-body {
  flex: 1;
  min-height: 0;
  padding: 12px 7px 9px;
}
.combo {
  width: 195px;
  height: 25px;
  display: flex;
  align-items: center;
  justify-content: space-between;
  padding: 0 4px 0 3px;
  margin-left: 5px;
  background-color: #e1e1e1;
  border: 1px solid #adadad;
}
.table-box {
  height: 94px;
  margin-top: 5px;
  display: flex;
  flex-direction: column;
  background-color: #fff;
  border: 1px solid #888;
  border-top-color: #bbb;
}
.results {
  flex: none;
  width: 100%;
  height: 77px;
  table-layout: fixed;
  border-collapse: collapse;
}
.results th,
.results td {
  height: 21px;
  padding: 0 0 0 5px;
  border-right: 2px solid #f0f0f8;
  border-bottom: 2px solid #f0f0f8;
}
.results th {
  height: 24px;
  font-weight: normal;
  text-align: left;
  border-bottom: 0;
}
.results th:first-child {
  padding-left: 7px;
}
.results th:nth-child(1) { width: 68px; }
.results th:nth-child(2) { width: 150px; }
.results th:nth-child(3) { width: 150px; }
.results th:nth-child(4) { width: 175px; }
.results th:nth-child(5) { width: 350px; }
.results .cut td {
  height: 11px;
  border-bottom: 0;
}
.table-scroll {
  height: 15px;
  flex: none;
  display: flex;
  align-items: center;
  padding: 0 6px 0 5px;
  background-color: #f0f0f0;
}
.table-thumb {
  width: 910px;
  height: 15px;
  margin: 0 auto 0 5px;
  background-color: #c8c8c8;
}

/* status bar */
.statusbar {
  flex: 1;
  display: flex;
  align-items: center;
  padding-left: 4px;
}
.status-grip {
  margin: 0 8px 0 0;
}
.heap-grip {
  margin: 0 5px 0 auto;
}
.heap {
  width: 143px;
  height: 21px;
  position: relative;
  display: flex;
  align-items: center;
  padding-left: 29px;
  background-color: #f0f0f0;
  border: 1px solid #fff;
  border-left: 1px solid #999;
  border-right: 1px solid #999;
}
.heap-used {
  position: absolute;
  left: 0;
  top: 0;
  bottom: 0;
  width: 56px;
  background-color: #ffffe0;
  border-right: 1px solid #999;
}
.heap-text {
  position: relative;
  font-size: 12.800px;
}
.trash {
  margin: 0 2px;
}
.end-grip {
  margin: 0 282px 0 7px;
}
```
